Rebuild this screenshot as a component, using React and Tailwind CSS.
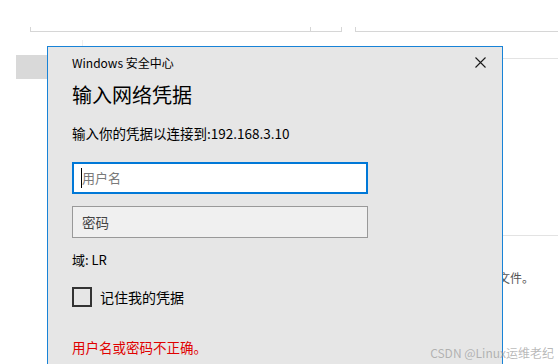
import React from 'react';

const font = { fontFamily: '"Noto Sans CJK SC", "Noto Sans", sans-serif' };

const CloseIcon = () => (
  <svg width="11" height="11" viewBox="0 0 11 11" fill="none" stroke="#1a1a1a" strokeWidth="1.1">
    <path d="M0.5 0.5 L10.5 10.5 M10.5 0.5 L0.5 10.5" />
  </svg>
);

const CredentialDialog = () => (
  <div className="absolute left-[47px] top-[46px] w-[456px] h-[330px] border border-[#1883d7] bg-[#e6e6e6] text-black">
    <div className="flex items-center justify-between h-[31px] pl-[24px] pr-[16px]">
      <span className="text-[12px] leading-[16px]">Windows 安全中心</span>
      <CloseIcon />
    </div>

    <div className="pl-[24px]">
      <h1 className="mt-[3px] text-[20px] leading-[28px] font-normal">输入网络凭据</h1>
      <p className="mt-[15px] text-[13.5px] leading-[18px]">输入你的凭据以连接到:192.168.3.10</p>

      <div className="mt-[20px] w-[296px] h-[32px] border-2 border-[#0078d7] bg-white flex items-center pl-[7px]">
        <span className="w-px h-[20px] bg-black" />
        <span className="text-[13px] text-[#7a7a7a] leading-[18px]">用户名</span>
      </div>

      <div className="mt-[12px] w-[296px] h-[32px] border border-[#999999] bg-[#f0f0f0] flex items-center pl-[9px]">
        <span className="text-[13.5px] text-[#444] leading-[18px]">密码</span>
      </div>

      <p className="mt-[13px] text-[13px] leading-[18px]">域: LR</p>

      <label className="mt-[18px] flex items-center gap-[8px]">
        <span className="w-[20px] h-[20px] border-2 border-[#333] bg-transparent" />
        <span className="text-[14px] leading-[18px]">记住我的凭据</span>
      </label>

      <p className="mt-[31px] text-[13.5px] leading-[18px] text-[#e00000]">用户名或密码不正确。</p>
    </div>
  </div>
);

export default function App() {
  return (
    <div className="relative w-[558px] h-[364px] overflow-hidden bg-white" style={font}>
      <div className="flex pt-[27px]">
        <div className="ml-[30px] w-[312px] h-[5px] border-x border-b border-[#d6d6d6] flex">
          <div className="w-[280px] h-full border-r border-[#d6d6d6]" />
        </div>
        <div className="ml-[13px] flex-1 h-[5px] border-l border-b border-[#d6d6d6]" />
      </div>

      <div className="flex">
        <div className="w-[355px] shrink-0">
          <div className="mt-[8px] ml-[82px] w-px h-[7px] bg-[#efefef]" />
          <div className="mt-[8px] ml-[16px] w-[40px] h-[24px] bg-[#d9d9d9]" />
        </div>
        <div className="flex-1">
          <div className="h-[27px] border-b border-[#e3e3e3]" />
          <div className="h-[177px] border-b border-[#e3e3e3]" />
          <p className="mt-[33px] pl-[143px] text-[12px] leading-[18px] text-[#555]">文件。</p>
        </div>
      </div>

      <CredentialDialog />

      <div className="absolute right-[4px] bottom-[3px] text-[12px] leading-[16px] text-[#9a9a9a]/70">
        CSDN @Linux运维老纪
      </div>
    </div>
  );
}
